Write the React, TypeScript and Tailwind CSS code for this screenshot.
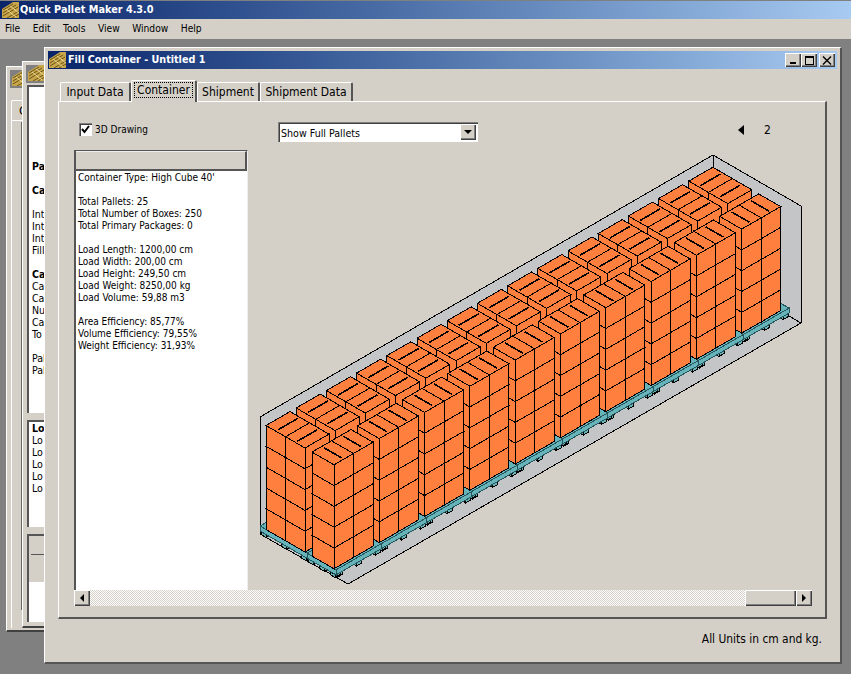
import type { ReactNode } from 'react';

const FONT = "font-['DejaVu_Sans_Condensed','Liberation_Sans',Arial,sans-serif]";
const RAISED = 'shadow-[inset_1px_1px_0_#ffffff,inset_-1px_-1px_0_#404040,inset_-2px_-2px_0_#808080]';
const SUNKEN = 'shadow-[inset_1px_1px_0_#808080,inset_2px_2px_0_#404040,inset_-1px_-1px_0_#ffffff]';

const ORANGE = '#ff7f3f';
const TEAL = '#66b3ba';

const pt = (l: number, w: number, h: number) => {
  return `${(260 + l + w).toFixed(1)},${(531 + 0.578 * (w - l) - h).toFixed(1)}`;
};

function Block({ l0, l1, w0, w1, h0, h1, fill, line = '#000' }: { l0: number; l1: number; w0: number; w1: number; h0: number; h1: number; fill: string; line?: string }) {
  return (
    <g fill={fill} stroke={line} strokeWidth={1}>
      <polygon points={[pt(l0, w0, h0), pt(l0, w1, h0), pt(l0, w1, h1), pt(l0, w0, h1)].join(' ')} />
      <polygon points={[pt(l0, w1, h0), pt(l1, w1, h0), pt(l1, w1, h1), pt(l0, w1, h1)].join(' ')} />
      <polygon points={[pt(l0, w0, h1), pt(l0, w1, h1), pt(l1, w1, h1), pt(l1, w0, h1)].join(' ')} />
    </g>
  );
}

const TOP = 5;
const LAYER = 20.8;

// one pallet: deck is drawn separately, this is 5 layers of 2 boxes
function PalletBoxes({ l, w, dl, dw, alongL }: { l: number; w: number; dl: number; dw: number; alongL: boolean }) {
  const items: ReactNode[] = [];
  for (let z = 0; z < 5; z++) {
    for (let b = 1; b >= 0; b--) {
      const l0 = alongL ? l + (dl / 2) * b : l;
      const l1 = alongL ? l0 + dl / 2 : l + dl;
      const w0 = alongL ? w : w + (dw / 2) * (1 - b);
      const w1 = alongL ? w + dw : w0 + dw / 2;
      items.push(<Block key={`${z}-${b}`} l0={l0} l1={l1} w0={w0} w1={w1} h0={TOP + z * LAYER} h1={TOP + (z + 1) * LAYER} fill={ORANGE} />);
      if (z === 4) {
        const h = TOP + 5 * LAYER;
        const a = alongL ? pt((l0 + l1) / 2, w0 + 2, h) : pt(l0 + 2, (w0 + w1) / 2, h);
        const c = alongL ? pt((l0 + l1) / 2, w1 - 2, h) : pt(l1 - 2, (w0 + w1) / 2, h);
        items.push(<polyline key={`t-${b}`} points={`${a} ${c}`} stroke="#000" strokeWidth={1.6} fill="none" />);
      }
    }
  }
  return <g>{items}</g>;
}

function Deck({ l0, l1, w0, w1 }: { l0: number; l1: number; w0: number; w1: number }) {
  const feetL = [l0 + 1, (l0 + l1) / 2 - 2, l1 - 6];
  const feetW = [w0 + 1, (w0 + w1) / 2 - 2, w1 - 6];
  return (
    <g>
      {feetL.map((f) => (
        <Block key={`l${f}`} l0={f} l1={f + 5} w0={w1 - 5} w1={w1} h0={-3} h1={0} fill={TEAL} />
      ))}
      {feetW.map((f) => (
        <Block key={`w${f}`} l0={l0} l1={l0 + 5} w0={f} w1={f + 5} h0={-3} h1={0} fill={TEAL} />
      ))}
      <Block l0={l0} l1={l1} w0={w0} w1={w1} h0={0} h1={5} fill={TEAL} line="#24565b" />
    </g>
  );
}

function ContainerDrawing() {
  const pallets: { key: number; l: number; w: number; dl: number; dw: number; alongL: boolean; id: string }[] = [];
  for (let i = 0; i < 15; i++) {
    const l = i * 30.2;
    pallets.push({ key: 13 - l, l, w: 6, dl: 24, dw: 39, alongL: false, id: `b${i}` });
  }
  for (let j = 0; j < 10; j++) {
    const l = j * 45.3;
    pallets.push({ key: 43 - l, l, w: 52, dl: 39, dw: 22, alongL: true, id: `f${j}` });
  }
  pallets.sort((a, b) => a.key - b.key);

  return (
    <svg width={564} height={440} viewBox="248 150 564 440" shapeRendering="crispEdges">
      <polygon points="260,417 713,155 801,206 801,323 348,584 260,534" fill="#c4c5c6" stroke="#000" />
      <line x1={713} y1={155} x2={713} y2={272} stroke="#000" />
      <line x1={801} y1={323} x2={713} y2={272} stroke="#000" />
      {pallets.map((p) =>
        p.alongL ? (
          <Deck key={`d${p.id}`} l0={p.l} l1={p.l + 45.3} w0={47} w1={76} />
        ) : (
          <Deck key={`d${p.id}`} l0={p.l} l1={p.l + 30.2} w0={0} w1={47} />
        ),
      )}
      {pallets.map((p) => (
        <PalletBoxes key={p.id} l={p.l} w={p.w} dl={p.dl} dw={p.dw} alongL={p.alongL} />
      ))}
    </svg>
  );
}

function Logo() {
  return (
    <svg width={17} height={16} viewBox="0 0 17 16" className="shrink-0">
      <polygon points="0,7 11,0 17,0 17,16 0,16" fill="#c7a64b" />
      <path d="M1 8 L11 2 M1 11 L14 3 M1 14 L16 5 M5 16 L17 9 M10 16 L17 12" stroke="#6d5418" strokeWidth={1} fill="none" />
      <path d="M4 7 L14 15 M8 4 L17 11" stroke="#ecd98c" strokeWidth={1} fill="none" />
    </svg>
  );
}

function CaptionButton({ children, className = '' }: { children: ReactNode; className?: string }) {
  return <div className={`w-4 h-3.5 bg-[#d4d0c8] flex items-center justify-center ${RAISED} ${className}`}>{children}</div>;
}

function Tab({ label, active, className = '' }: { label: string; active?: boolean; className?: string }) {
  return (
    <div
      className={`relative bg-[#d4d0c8] border-t border-l border-white border-r-2 border-r-[#555555] rounded-t-[2px] text-[12px] text-black flex items-center justify-center ${
        active ? 'h-[22px] z-10 -mb-px' : 'h-[19px]'
      } ${className}`}
    >
      {active ? <span className="border border-dotted border-black leading-[14px] px-[2px] -mt-1">{label}</span> : label}
    </div>
  );
}

const REPORT = [
  "Container Type: High Cube 40'",
  '',
  'Total Pallets: 25',
  'Total Number of Boxes: 250',
  'Total Primary Packages: 0',
  '',
  'Load Length: 1200,00 cm',
  'Load Width: 200,00 cm',
  'Load Height: 249,50 cm',
  'Load Weight: 8250,00 kg',
  'Load Volume: 59,88 m3',
  '',
  'Area Efficiency: 85,77%',
  'Volume Efficiency: 79,55%',
  'Weight Efficiency: 31,93%',
];

const BACK_TEXT: [string, boolean][] = [
  ['Pa', true], ['', false], ['Ca', true], ['', false], ['Int', false], ['Int', false], ['Int', false], ['Fill', false], ['', false],
  ['Ca', true], ['Ca', false], ['Ca', false], ['Nu', false], ['Ca', false], ['To', false], ['', false], ['Pal', false], ['Pal', false],
];

function BackWindows() {
  return (
    <>
      {/* furthest window */}
      <div className="absolute left-[6px] top-[27px] w-[80px] h-[566px] bg-[#d4d0c8] border-l border-t border-white border-b-2 border-b-[#404040] p-[3px]">
        <div className="h-[18px] bg-[#808080] pl-[2px]"><Logo /></div>
        <div className="ml-[1px] mt-3 w-[30px] h-5 border-l border-t border-white rounded-t-[2px] text-[13px] pl-[7px] leading-5">C</div>
        <div className="ml-[1px] h-[508px] border-l border-t border-white flex">
          <div className="ml-[9px] mt-[1px] h-[488px] border-l-2 border-l-[#666666]" />
        </div>
      </div>
      {/* second window */}
      <div className="absolute left-[22px] top-[22px] w-[80px] h-[567px] bg-[#d4d0c8] border-l border-t border-white border-b-2 border-b-[#404040] p-[3px] text-[10.5px] leading-3 text-black">
        <div className="h-[18px] bg-[#808080] pl-[2px]"><Logo /></div>
        <div className="ml-[1px] mt-[2px] h-[328px] bg-white border-l-2 border-t-2 border-[#555555] pl-[3px] pt-[73px]">
          {BACK_TEXT.map(([t, bold], i) => (
            <div key={i} className={`h-3 ${bold ? 'font-bold' : ''}`}>{t}</div>
          ))}
        </div>
        <div className="ml-[1px] mt-[7px] h-[107px] bg-white border-l-2 border-t-2 border-[#555555] pl-[3px]">
          <div className="h-3 font-bold">Lo</div>
          {[0, 1, 2, 3, 4].map((i) => (
            <div key={i} className="h-3">Lo</div>
          ))}
        </div>
        <div className="ml-[1px] mt-[7px] h-[88px] border-l-2 border-t-2 border-[#555555] flex flex-col">
          <div className="h-[19px] border-b border-b-[#555555] ml-[2px]" />
          <div className="h-[27px]" />
          <div className="flex-1 bg-white" />
        </div>
      </div>
    </>
  );
}

function FrontWindow() {
  return (
    <div className={`absolute left-[44px] top-[8px] w-[798px] h-[617px] bg-[#d4d0c8] border-l border-t border-white border-r-2 border-b-2 border-r-[#555555] border-b-[#555555] p-[3px] flex flex-col ${FONT}`}>
      <div className="h-[18px] shrink-0 bg-linear-to-r from-[#0a246a] to-[#a6caf0] flex items-center pl-[1px] pr-[2px]">
        <Logo />
        <span className="ml-[2px] text-white text-[10.7px] font-bold">Fill Container - Untitled 1</span>
        <div className="ml-auto flex">
          <CaptionButton>
            <div className="w-[6px] h-[2px] bg-black mt-[6px] -ml-[1px]" />
          </CaptionButton>
          <CaptionButton>
            <div className="w-[9px] h-[9px] border border-black border-t-2" />
          </CaptionButton>
          <CaptionButton className="ml-[2px]">
            <svg width={10} height={9} viewBox="0 0 10 9">
              <path d="M1 0.5 L9 8.5 M9 0.5 L1 8.5" stroke="#000" strokeWidth={1.4} />
            </svg>
          </CaptionButton>
        </div>
      </div>

      <div className="ml-[12px] mt-[10px] h-[22px] shrink-0 flex items-end">
        <Tab label="Input Data" className="w-[71px]" />
        <Tab label="Container" active className="w-[66px]" />
        <Tab label="Shipment" className="w-[63px]" />
        <Tab label="Shipment Data" className="w-[93px]" />
      </div>

      <div className="ml-[10px] w-[769px] h-[518px] shrink-0 border-l border-t border-white border-r-2 border-b-2 border-r-[#555555] border-b-[#555555] pl-[15px] pt-[20px]">
        <div className="h-5 flex items-center">
          <div className="w-[204px] flex items-center pl-[5px] -mt-[5px]">
            <div className={`w-[13px] h-[13px] bg-white flex items-center justify-center ${SUNKEN}`}>
              <svg width={9} height={9} viewBox="0 0 9 9">
                <path d="M1 4 L3.5 7 L8 1" stroke="#000" strokeWidth={2} fill="none" />
              </svg>
            </div>
            <span className="ml-[3px] text-[10px] text-black">3D Drawing</span>
          </div>
          <div className={`w-[200px] h-5 bg-white pl-[3px] pr-[2px] flex items-center justify-between text-[10.6px] text-black ${SUNKEN}`}>
            <span className="mt-[3px]">Show Full Pallets</span>
            <div className={`w-4 h-4 bg-[#d4d0c8] flex items-center justify-center ${RAISED}`}>
              <div className="w-0 h-0 border-x-4 border-x-transparent border-t-4 border-t-black" />
            </div>
          </div>
          <div className="ml-[260px] -mt-[5px] w-0 h-0 border-y-[5px] border-y-transparent border-r-[6px] border-r-black" />
          <span className="ml-[20px] -mt-[5px] text-[12px] text-black">2</span>
        </div>

        <div className="mt-[8px] w-[738px] flex flex-col">
          <div className="flex h-[440px]">
            <div className="w-[174px] bg-white border-l-2 border-t border-[#555555] border-r border-r-[#eeeeee] flex flex-col">
              <div className="h-5 shrink-0 bg-[#d4d0c8] border-r-2 border-b-2 border-r-[#555555] border-b-[#555555] border-t border-t-[#eeeeee]" />
              <div className="pl-[2px] pt-[1px] text-[10px] leading-3 text-black">
                {REPORT.map((line, i) => (
                  <div key={i} className="h-3 whitespace-nowrap">{line}</div>
                ))}
              </div>
            </div>
            <ContainerDrawing />
          </div>
          <div className="h-4 flex">
            <div className={`w-4 h-4 bg-[#d4d0c8] flex items-center justify-center ${RAISED}`}>
              <div className="w-0 h-0 border-y-4 border-y-transparent border-r-4 border-r-black" />
            </div>
            <div className="flex-1 bg-[repeating-conic-gradient(#ffffff_0_25%,#d4d0c8_0_50%)] bg-size-[2px_2px]" />
            <div className={`w-[51px] h-4 bg-[#d4d0c8] ${RAISED}`} />
            <div className={`w-4 h-4 bg-[#d4d0c8] flex items-center justify-center ${RAISED}`}>
              <div className="w-0 h-0 border-y-4 border-y-transparent border-l-4 border-l-black" />
            </div>
          </div>
        </div>
      </div>

      <div className="mt-[12px] pr-[15px] text-right text-[11.9px] leading-4 text-black">All Units in cm and kg.</div>
    </div>
  );
}

export default function App() {
  return (
    <div className={`w-[851px] h-[674px] overflow-hidden bg-[#808080] flex flex-col ${FONT}`}>
      <div className="h-[19px] shrink-0 border-t border-t-[#808080] bg-linear-to-r from-[#0a246a] to-[#a6caf0] flex items-center pl-[2px]">
        <Logo />
        <span className="ml-[1px] text-white text-[10.8px] font-bold">Quick Pallet Maker 4.3.0</span>
      </div>
      <div className="h-5 shrink-0 bg-[#d4d0c8] flex items-center pl-[5px] gap-[12.5px] text-[10.2px] text-black">
        <span>File</span>
        <span>Edit</span>
        <span>Tools</span>
        <span>View</span>
        <span>Window</span>
        <span>Help</span>
      </div>
      <div className="relative flex-1">
        <BackWindows />
        <FrontWindow />
      </div>
    </div>
  );
}
